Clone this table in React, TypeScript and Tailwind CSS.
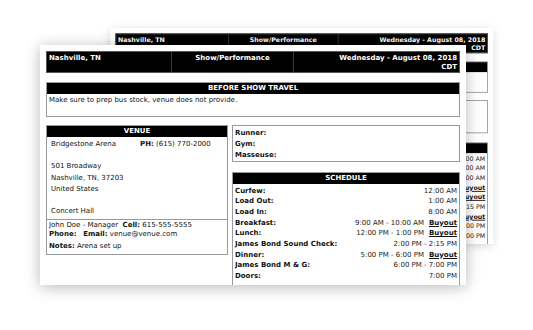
import React from "react";

const font = { fontFamily: '"DejaVu Sans", Verdana, sans-serif' };

type Row = { label: string; time: string; buyout?: boolean };

const rows: Row[] = [
  { label: "Curfew:", time: "12:00 AM" },
  { label: "Load Out:", time: "1:00 AM" },
  { label: "Load In:", time: "8:00 AM" },
  { label: "Breakfast:", time: "9:00 AM - 10:00 AM", buyout: true },
  { label: "Lunch:", time: "12:00 PM - 1:00 PM", buyout: true },
  { label: "James Bond Sound Check:", time: "2:00 PM - 2:15 PM" },
  { label: "Dinner:", time: "5:00 PM - 6:00 PM", buyout: true },
  { label: "James Bond M & G:", time: "6:00 PM - 7:00 PM" },
  { label: "Doors:", time: "7:00 PM" },
];

function Card({ back = false }: { back?: boolean }) {
  const hid = back ? "invisible" : "";
  return (
    <div className="w-[414px] text-[7px] leading-[9px] text-[#111]" style={font}>
      <div className="grid grid-cols-[125px_122px_1fr] bg-black text-white font-bold h-[22px] border border-[#555]">
        <div className="pl-[2px] pt-[2px] border-r border-[#3a3a3a]">Nashville, TN</div>
        <div className="text-center pt-[2px] border-r border-[#3a3a3a]">Show/Performance</div>
        <div className="text-right pr-[2px] pt-[2px]">
          Wednesday - August 08, 2018
          <br />
          CDT
        </div>
      </div>

      <div className="mt-[9px] border border-[#9a9a9a] h-[35px]">
        <div className={`bg-black text-white font-bold text-center h-[11px] leading-[11px]`}>
          <span className={hid}>BEFORE SHOW TRAVEL</span>
        </div>
        <div className={`pl-[2px] pt-[1px] leading-[10px] ${hid}`}>Make sure to prep bus stock, venue does not provide.</div>
      </div>

      <div className="mt-[8px] flex gap-[4px] items-start">
        <div className="w-[182px] shrink-0 border border-[#9a9a9a]">
          <div className="bg-black text-white font-bold text-center h-[11px] leading-[11px]">
            <span className={hid}>VENUE</span>
          </div>
          <div className={`pl-[4px] pt-[2px] pb-[2px] leading-[11.2px] border-b border-[#9a9a9a]`}>
            <div className={`flex ${hid}`}>
              <span className="w-[89px] shrink-0">Bridgestone Arena</span>
              <span>
                <b>PH:</b> (615) 770-2000
              </span>
            </div>
            <div>&nbsp;</div>
            <div className={hid}>501 Broadway</div>
            <div className={hid}>Nashville, TN, 37203</div>
            <div className={hid}>United States</div>
            <div>&nbsp;</div>
            <div className={hid}>Concert Hall</div>
          </div>
          <div className={`pl-[2px] pt-[1px] pb-[3px] leading-[9px] ${hid}`}>
            <div>
              John Doe - Manager&nbsp; <b>Cell:</b> 615-555-5555
            </div>
            <div>
              <b>Phone:</b>&nbsp;&nbsp; <b>Email:</b> venue@venue.com
            </div>
            <div className="mt-[3px]">
              <b>Notes:</b> Arena set up
            </div>
          </div>
        </div>

        <div className="flex-1 flex flex-col gap-[10px]">
          <div className="border border-[#9a9a9a] pl-[2px] pt-[2px] pb-[2px] leading-[11px] font-bold h-[37px]">
            <div className={hid}>Runner:</div>
            <div className={hid}>Gym:</div>
            <div className={hid}>Masseuse:</div>
          </div>
          <div className="border border-[#9a9a9a] h-[130px]">
            <div className="bg-black text-white font-bold text-center h-[11px] leading-[11px]">
              <span className={hid}>SCHEDULE</span>
            </div>
            <div className="pt-[1.5px] leading-[10.7px]">
              {rows.map((r) => (
                <div key={r.label} className="flex justify-between pl-[2px] pr-[2px]">
                  <span className={`font-bold ${hid}`}>{r.label}</span>
                  <span className="text-[#222]">
                    {r.time}
                    {r.buyout && <b className="underline ml-[5px] text-[#111]">Buyout</b>}
                  </span>
                </div>
              ))}
            </div>
          </div>
        </div>
      </div>
    </div>
  );
}

export default function App() {
  return (
    <div className="relative w-[533px] h-[330px] bg-white overflow-hidden">
      <div className="absolute left-[109.6px] top-[27.6px] origin-top-left scale-[0.9]">
        <div className="w-[426px] h-[240px] bg-white p-[6px] overflow-hidden shadow-[0_2px_10px_rgba(0,0,0,0.18)]">
          <Card back />
        </div>
      </div>
      <div className="absolute left-[40px] top-[45px] w-[426px] h-[240px] bg-white p-[6px] overflow-hidden shadow-[0_2px_14px_rgba(0,0,0,0.28)]">
        <Card />
      </div>
    </div>
  );
}
